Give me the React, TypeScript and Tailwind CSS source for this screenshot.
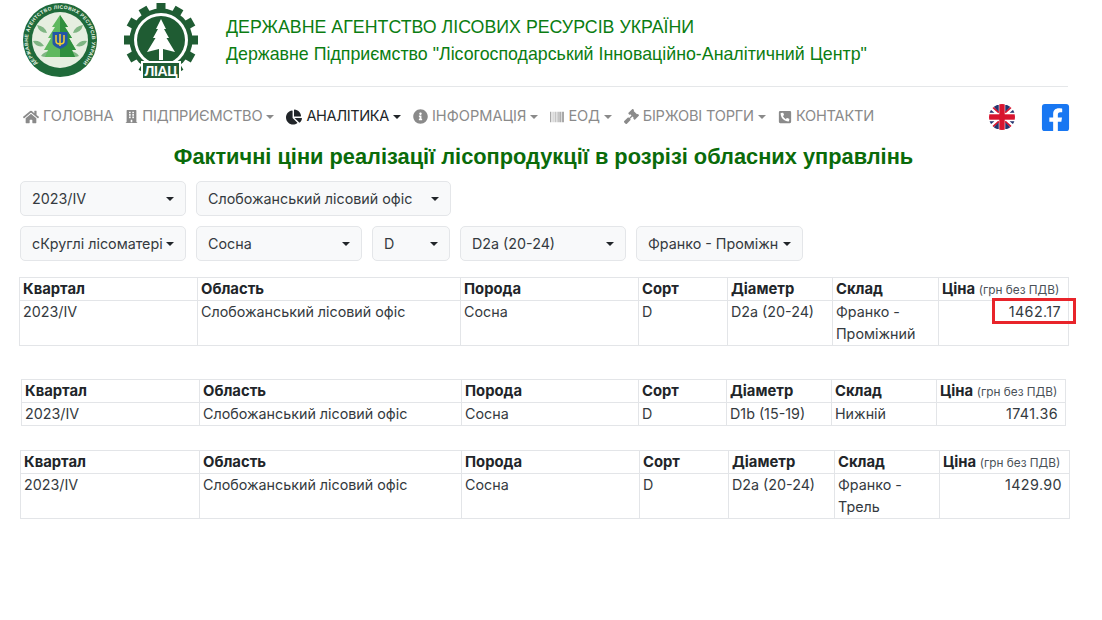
import { FaHome, FaBuilding, FaChartPie, FaInfoCircle, FaBarcode, FaGavel, FaPhoneSquareAlt, FaFacebookSquare } from 'react-icons/fa'
import type { ReactNode } from 'react'

const FONT = "font-['Inter','Liberation_Sans',sans-serif]"

const StateLogo = () => (
  <svg viewBox="0 0 74 74" className="w-[74px] h-[74px] shrink-0">
    <defs>
      <path id="ringTop" d="M 14.5 60.5 A 32 32 0 1 1 59.5 60.5" />
    </defs>
    <circle cx="37" cy="37" r="37" fill="#1f6a3a" />
    <circle cx="37" cy="37" r="28" fill="#e6eee0" />
    <path d="M14 22q8 1 10 8q-8 0-10-8zM60 22q-8 1-10 8q8 0 10-8zM10 38q7-1 11 5q-8 2-11-5zM64 38q-7-1-11 5q8 2 11-5zM18 53q4-6 11-4q-3 7-11 4zM56 53q-4-6-11-4q3 7 11 4z" fill="#7fb583" />
    <path d="M37 12 L45 24 L42 24 L49 35 L46 35 L53 47 L49 47 L52 54 L22 54 L25 47 L21 47 L28 35 L25 35 L32 24 L29 24 Z" fill="#5fb85f" />
    <path d="M37 12 L45 24 L42 24 L49 35 L46 35 L53 47 L49 47 L52 54 L37 54 Z" fill="#2f8f3e" />
    <path d="M29.5 29h15v11q0 3-7.5 6q-7.500-3-7.500-6z" fill="#2456a6" />
    <path d="M37 31v12M33 32v6q0 3 4 3q4 0 4-3v-6" stroke="#f5cf2f" strokeWidth="1.5" fill="none" />
    <text fontSize="5" fontWeight="700" fill="#e9f3e3" fontFamily="Liberation Sans, sans-serif">
      <textPath href="#ringTop" startOffset="0" textLength="150">ДЕРЖАВНЕ АГЕНТСТВО ЛІСОВИХ РЕСУРСІВ УКРАЇНИ</textPath>
    </text>
  </svg>
)

const LiacLogo = () => {
  const teeth = Array.from({ length: 12 }, (_, i) => i * 30)
  return (
    <svg viewBox="0 0 74 76" className="w-[74px] h-[76px] shrink-0">
      {teeth.map((a) => (
        <rect key={a} x="32.500" y="0" width="9" height="10" fill="#1f5c33" transform={`rotate(${a} 37 37)`} />
      ))}
      <circle cx="37" cy="37" r="31.5" fill="#1f5c33" />
      <circle cx="37" cy="37" r="27" fill="#fff" />
      <circle cx="37" cy="37" r="24" fill="#1f5c33" />
      <path d="M37 16 L42 26 L40 26 L45 35 L42.500 35 L51 49 L39 46 L39 57 L35 57 L35 46 L23 49 L31.500 35 L29 35 L34 26 L32 26 Z" fill="#fff" />
      <rect x="17" y="58" width="40" height="18" fill="#fff" />
      <rect x="19" y="60" width="36" height="15" fill="#1f5c33" />
      <text x="37" y="73" textAnchor="middle" fontSize="14" fontWeight="700" fill="#fff" textLength="33" fontFamily="Liberation Sans, sans-serif">ЛІАЦ</text>
    </svg>
  )
}

const UkFlag = () => (
  <svg viewBox="0 0 24 24" className="w-[26px] h-[26px] shrink-0">
    <defs>
      <clipPath id="flagClip"><circle cx="12" cy="12" r="12" /></clipPath>
    </defs>
    <g clipPath="url(#flagClip)">
      <rect width="24" height="24" fill="#fff" />
      <path d="M3 1h6v7zM15 1h6l-6 7zM3 23h6v-7zM15 23h6l-6-7zM0 4l5 4H0zM24 4l-5 4h5zM0 20l5-4H0zM24 20l-5-4h5z" fill="#24346f" />
      <path d="M0 0l9 8M24 0l-9 8M0 24l9-8M24 24l-9-8" stroke="#d8152f" strokeWidth="1.4" />
      <rect x="9.500" width="5" height="24" fill="#d8152f" />
      <rect y="9.500" width="24" height="5" fill="#d8152f" />
    </g>
  </svg>
)

const NavItem = ({ icon, label, caret, active, labelClass }: { icon: ReactNode; label: string; caret?: boolean; active?: boolean; labelClass?: string }) => (
  <div className={`flex items-center gap-[4px] ${active ? 'text-[#212529]' : 'text-[#8a8a8a]'}`}>
    {icon}
    <span className={labelClass}>{label}</span>
    {caret && <span className={`border-x-[4.5px] border-t-[4.5px] border-x-transparent ${active ? 'border-t-[#212529]' : 'border-t-[#8a8a8a]'}`} />}
  </div>
)

const Select = ({ label, width }: { label: string; width: string }) => (
  <div className={`${width} h-[35px] flex items-center justify-between px-[11px] bg-[#f8f9fa] border border-[#e4e6e9] rounded-[5px] text-[14.3px] text-[#343a40] whitespace-nowrap`}>
    <span>{label}</span>
    <span className="border-x-[4.5px] border-t-[4.5px] border-x-transparent border-t-[#212529]" />
  </div>
)

type Row = { district: string; breed: string; sort: string; dia: string; store: string; price: string }

const PriceTable = ({ cols, row, className, rowClass }: { cols: string[]; row: Row; className: string; rowClass: string }) => {
  const cell = 'border border-[#e3e5e8] px-[3px] align-top'
  const th = `${cell} h-[23px] text-left font-bold text-[14.8px] leading-[22px] text-[#212529]`
  const td = `${cell} ${rowClass} text-[14.3px] leading-[22px] text-[#343a40]`
  return (
    <table className={`table-fixed border-collapse ${className}`}>
      <colgroup>
        {cols.map((c, i) => (
          <col key={i} className={c} />
        ))}
      </colgroup>
      <thead>
        <tr>
          <th className={th}>Квартал</th>
          <th className={th}>Область</th>
          <th className={th}>Порода</th>
          <th className={th}>Сорт</th>
          <th className={th}>Діаметр</th>
          <th className={th}>Склад</th>
          <th className={`${th} whitespace-nowrap`}>
            Ціна <span className="font-normal text-[11.8px] leading-none text-[#495057]">(грн без ПДВ)</span>
          </th>
        </tr>
      </thead>
      <tbody>
        <tr>
          <td className={td}>2023/IV</td>
          <td className={td}>{row.district}</td>
          <td className={td}>{row.breed}</td>
          <td className={td}>{row.sort}</td>
          <td className={td}>{row.dia}</td>
          <td className={td}>{row.store}</td>
          <td className={`${td} text-right pr-[7px] tracking-[0.4px]`}>{row.price}</td>
        </tr>
      </tbody>
    </table>
  )
}

export default function App() {
  const office = 'Слобожанський лісовий офіс'
  return (
    <div className={`${FONT} relative w-[1102px] h-[620px] bg-white overflow-hidden`}>
      <header className="flex items-start h-[78px] pt-[3px] pl-[23px]">
        <StateLogo />
        <div className="ml-[27px]">
          <LiacLogo />
        </div>
        <div className="ml-[28px] mt-[11px] text-[#0b7d12] font-['Liberation_Sans',sans-serif]">
          <div className="text-[17.8px] leading-[27px]">ДЕРЖАВНЕ АГЕНТСТВО ЛІСОВИХ РЕСУРСІВ УКРАЇНИ</div>
          <div className="text-[17.8px] leading-[27px]">Державне Підприємство "Лісогосподарський Інноваційно-Аналітичний Центр"</div>
        </div>
      </header>
      <div className="ml-[20px] w-[1048px] mt-[8px] border-t border-[#e5e7e9]" />

      <nav className="flex items-center h-[58px] pt-[2px] ml-[23px] w-[1048px] text-[14.6px] tracking-[-0.2px]">
        <div className="flex items-center gap-[12px]">
          <NavItem icon={<FaHome size={16} />} label="ГОЛОВНА" />
          <NavItem icon={<FaBuilding size={13} />} label="ПІДПРИЄМСТВО" caret />
          <NavItem icon={<FaChartPie size={16} />} label="АНАЛІТИКА" caret active labelClass="tracking-[-0.4px]" />
          <NavItem icon={<FaInfoCircle size={15} />} label="ІНФОРМАЦІЯ" caret labelClass="tracking-normal" />
          <NavItem icon={<FaBarcode size={14} />} label="ЕОД" caret />
          <NavItem icon={<FaGavel size={15} />} label="БІРЖОВІ ТОРГИ" caret />
          <NavItem icon={<FaPhoneSquareAlt size={14} />} label="КОНТАКТИ" />
        </div>
        <div className="ml-auto flex items-center gap-[25px]">
          <UkFlag />
          <FaFacebookSquare size={31} className="text-[#1877f2]" />
        </div>
      </nav>

      <h1 className="text-center w-[1087px] text-[21.8px] leading-[24px] font-bold text-[#0a6b0a] font-['Liberation_Sans',sans-serif]">
        Фактичні ціни реалізації лісопродукції в розрізі обласних управлінь
      </h1>

      <div className="mt-[12px] ml-[20px] flex flex-col gap-[10px]">
        <div className="flex gap-[10px]">
          <Select label="2023/IV" width="w-[166px]" />
          <Select label={office} width="w-[255px]" />
        </div>
        <div className="flex gap-[10px]">
          <Select label="сКруглі лісоматері" width="w-[166px]" />
          <Select label="Сосна" width="w-[166px]" />
          <Select label="D" width="w-[78px]" />
          <Select label="D2a (20-24)" width="w-[166px]" />
          <Select label="Франко - Проміжн" width="w-[167px]" />
        </div>
      </div>

      <div className="mt-[16px]">
        <PriceTable
          className="ml-[19px] w-[1049px]"
          rowClass="h-[45px]"
          cols={['w-[178px]', 'w-[263px]', 'w-[178px]', 'w-[89px]', 'w-[105px]', 'w-[106px]', 'w-[130px]']}
          row={{ district: office, breed: 'Сосна', sort: 'D', dia: 'D2a (20-24)', store: 'Франко - Проміжний', price: '1462.17' }}
        />
        <PriceTable
          className="ml-[21px] w-[1044px] mt-[33px]"
          rowClass="h-[23px]"
          cols={['w-[178px]', 'w-[262px]', 'w-[177px]', 'w-[88px]', 'w-[105px]', 'w-[105px]', 'w-[129px]']}
          row={{ district: office, breed: 'Сосна', sort: 'D', dia: 'D1b (15-19)', store: 'Нижній', price: '1741.36' }}
        />
        <PriceTable
          className="ml-[20px] w-[1049px] mt-[24px]"
          rowClass="h-[45px]"
          cols={['w-[179px]', 'w-[262px]', 'w-[178px]', 'w-[89px]', 'w-[106px]', 'w-[105px]', 'w-[130px]']}
          row={{ district: office, breed: 'Сосна', sort: 'D', dia: 'D2a (20-24)', store: 'Франко - Трель', price: '1429.90' }}
        />
      </div>

      <div className="absolute left-[992px] top-[298px] w-[84px] h-[26px] border-[3px] border-[#e8242a]" />
    </div>
  )
}
